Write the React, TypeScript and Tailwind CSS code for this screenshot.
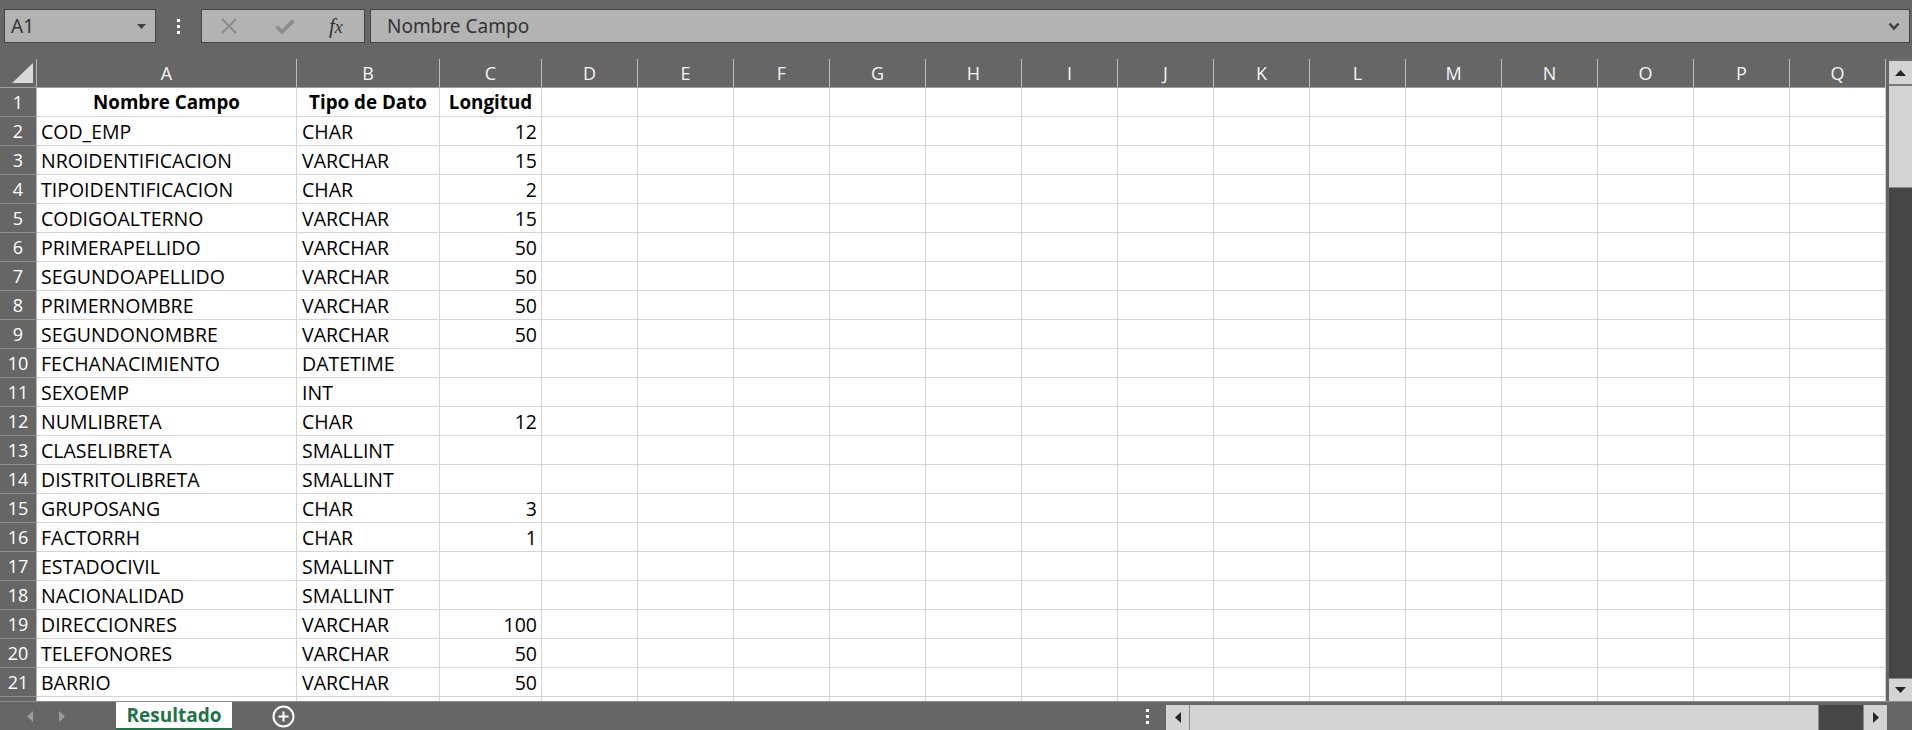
import React from "react";

type Row = [string, string, string];

const DATA: Row[] = [
  ["COD_EMP", "CHAR", "12"],
  ["NROIDENTIFICACION", "VARCHAR", "15"],
  ["TIPOIDENTIFICACION", "CHAR", "2"],
  ["CODIGOALTERNO", "VARCHAR", "15"],
  ["PRIMERAPELLIDO", "VARCHAR", "50"],
  ["SEGUNDOAPELLIDO", "VARCHAR", "50"],
  ["PRIMERNOMBRE", "VARCHAR", "50"],
  ["SEGUNDONOMBRE", "VARCHAR", "50"],
  ["FECHANACIMIENTO", "DATETIME", ""],
  ["SEXOEMP", "INT", ""],
  ["NUMLIBRETA", "CHAR", "12"],
  ["CLASELIBRETA", "SMALLINT", ""],
  ["DISTRITOLIBRETA", "SMALLINT", ""],
  ["GRUPOSANG", "CHAR", "3"],
  ["FACTORRH", "CHAR", "1"],
  ["ESTADOCIVIL", "SMALLINT", ""],
  ["NACIONALIDAD", "SMALLINT", ""],
  ["DIRECCIONRES", "VARCHAR", "100"],
  ["TELEFONORES", "VARCHAR", "50"],
  ["BARRIO", "VARCHAR", "50"],
];

const LETTERS = ["A", "B", "C", "D", "E", "F", "G", "H", "I", "J", "K", "L", "M", "N", "O", "P", "Q"];
const EXTRA = 14;

const GRID = "grid grid-cols-[37px_260px_143px_102px_repeat(14,96px)]";

function EmptyCells({ h }: { h: string }) {
  return (
    <>
      {Array.from({ length: EXTRA }).map((_, i) => (
        <div key={i} className={`${h} bg-white border-r border-b border-[#d4d4d4]`} />
      ))}
    </>
  );
}

function SheetRow({ n, cells, bold }: { n: number; cells: Row; bold?: boolean }) {
  const txt = `${bold ? "text-[18.8px]" : "text-[19.5px]"} leading-[29px] text-black whitespace-nowrap overflow-hidden`;
  return (
    <div className={`${GRID} h-[29px]`}>
      <div className="h-[29px] bg-[#666666] border-r border-b border-r-[#b4b4b4] border-b-[#8e8e8e] flex items-center justify-center text-[18px] text-white">
        {n}
      </div>
      <div
        className={`h-[29px] bg-white border-r border-b border-[#d4d4d4] ${txt} ${
          bold ? "font-bold text-center" : "pl-[4px]"
        }`}
      >
        {cells[0]}
      </div>
      <div
        className={`h-[29px] bg-white border-r border-b border-[#d4d4d4] ${txt} ${
          bold ? "font-bold text-center" : "pl-[5px]"
        }`}
      >
        {cells[1]}
      </div>
      <div
        className={`h-[29px] bg-white border-r border-b border-[#d4d4d4] ${txt} ${
          bold ? "font-bold text-center" : "text-right pr-[4px]"
        }`}
      >
        {cells[2]}
      </div>
      <EmptyCells h="h-[29px]" />
    </div>
  );
}

function TriDown({ className }: { className?: string }) {
  return (
    <svg width="9" height="5" viewBox="0 0 9 5" className={className}>
      <path d="M0 0 L9 0 L4.5 5 Z" fill="#404040" />
    </svg>
  );
}

export default function App() {
  return (
    <div className="w-[1912px] h-[730px] bg-[#666666] flex flex-col overflow-hidden font-['Open_Sans',sans-serif]">
      {/* Toolbar */}
      <div className="h-[59px] flex items-start pt-[9px] pl-[4px] shrink-0">
        <div className="w-[152px] h-[34px] bg-[#b3b3b3] border border-[#444444] flex items-center justify-between pl-[6px] pr-[9px]">
          <span className="text-[19px] text-[#333333] leading-none font-['Noto_Sans',sans-serif]">A1</span>
          <TriDown />
        </div>
        <div className="w-[45px] h-[34px] flex flex-col items-center justify-center gap-[3px]">
          <div className="w-[3px] h-[3px] bg-white" />
          <div className="w-[3px] h-[3px] bg-white" />
          <div className="w-[3px] h-[3px] bg-white" />
        </div>
        <div className="w-[164px] h-[34px] bg-[#b3b3b3] border border-[#444444] flex items-center">
          <svg width="18" height="18" viewBox="0 0 18 18" className="ml-[18px]">
            <path d="M2 2 L16 16 M16 2 L2 16" stroke="#8a8a8a" strokeWidth="2" />
          </svg>
          <svg width="20" height="17" viewBox="0 0 20 17" className="ml-[37px]">
            <path d="M1.5 8.5 L7 14 L18.5 2.5" stroke="#8a8a8a" strokeWidth="3.4" fill="none" />
          </svg>
          <span className="ml-[34px] text-[21px] italic text-[#333333] font-['Liberation_Serif',serif] leading-none">
            <span className="font-normal">f</span>
            <span className="text-[18px]">x</span>
          </span>
        </div>
        <div className="ml-[5px] w-[1540px] h-[34px] bg-[#b3b3b3] border border-[#444444] flex items-center justify-between pl-[16px] pr-[9px]">
          <span className="text-[19px] text-[#333333] leading-none font-['Noto_Sans',sans-serif]">Nombre Campo</span>
          <svg width="12" height="9" viewBox="0 0 12 9">
            <path d="M1.5 1.5 L6 6.5 L10.5 1.5" stroke="#404040" strokeWidth="2.6" fill="none" />
          </svg>
        </div>
      </div>

      {/* Main grid area */}
      <div className="h-[642px] flex shrink-0">
        <div className="w-[1886px] flex flex-col overflow-hidden">
          {/* Column header */}
          <div className={`${GRID} h-[29px]`}>
            <div className="h-[29px] border-r border-b border-r-[#b4b4b4] border-b-[#a0a0a0] relative">
              <svg width="37" height="29" viewBox="0 0 37 29" className="absolute left-0 top-0">
                <path d="M33 4 L33 24 L12 24 Z" fill="#d9d9d9" />
              </svg>
            </div>
            {LETTERS.map((l) => (
              <div
                key={l}
                className="h-[29px] border-r border-b border-r-[#bdbdbd] border-b-[#a0a0a0] flex items-center justify-center text-[18px] text-[#f4f4f4]"
              >
                {l}
              </div>
            ))}
          </div>
          <SheetRow n={1} cells={["Nombre Campo", "Tipo de Dato", "Longitud"]} bold />
          {DATA.map((r, i) => (
            <SheetRow key={i} n={i + 2} cells={r} />
          ))}
          {/* partial row 22 */}
          <div className={`${GRID} h-[4px]`}>
            <div className="h-[4px] bg-[#666666] border-r border-r-[#b4b4b4]" />
            <div className="h-[4px] bg-white border-r border-[#d4d4d4]" />
            <div className="h-[4px] bg-white border-r border-[#d4d4d4]" />
            <div className="h-[4px] bg-white border-r border-[#d4d4d4]" />
            {Array.from({ length: EXTRA }).map((_, i) => (
              <div key={i} className="h-[4px] bg-white border-r border-[#d4d4d4]" />
            ))}
          </div>
        </div>

        {/* Vertical scrollbar */}
        <div className="w-[26px] pl-[3px] flex">
          <div className="w-[23px] flex flex-col bg-[#464646]">
            <div className="h-[2px] bg-[#6e6e6e]" />
            <div className="h-[23px] bg-[#d4d4d4] flex items-center justify-center">
              <svg width="11" height="6" viewBox="0 0 11 6">
                <path d="M0 6 L11 6 L5.5 0 Z" fill="#262626" />
              </svg>
            </div>
            <div className="h-[2px] bg-[#7a7a7a]" />
            <div className="h-[102px] bg-[#d4d4d4] border-b border-[#8a8a8a]" />
            <div className="flex-1 bg-[#464646]" />
            <div className="h-[23px] bg-[#d4d4d4] border-t border-[#8a8a8a] flex items-center justify-center">
              <svg width="11" height="6" viewBox="0 0 11 6">
                <path d="M0 0 L11 0 L5.5 6 Z" fill="#262626" />
              </svg>
            </div>
          </div>
        </div>
      </div>

      {/* Bottom bar */}
      <div className="h-[29px] flex shrink-0 border-t border-[#8c8c8c]">
        <div className="w-[116px] flex items-center">
          <svg width="8" height="11" viewBox="0 0 8 11" className="ml-[26px]">
            <path d="M7 0 L7 11 L1 5.5 Z" fill="#9c9c9c" />
          </svg>
          <svg width="8" height="11" viewBox="0 0 8 11" className="ml-[24px]">
            <path d="M1 0 L1 11 L7 5.5 Z" fill="#9c9c9c" />
          </svg>
        </div>
        <div className="w-[116px] bg-white border-b-2 border-[#217346] flex items-center justify-center">
          <span className="text-[19px] font-bold text-[#217346] leading-none">Resultado</span>
        </div>
        <div className="ml-[40px] flex items-center">
          <svg width="23" height="23" viewBox="0 0 23 23">
            <circle cx="11.5" cy="11.5" r="10" stroke="white" strokeWidth="2" fill="none" />
            <path d="M11.5 6.5 L11.5 16.5 M6.5 11.5 L16.5 11.5" stroke="white" strokeWidth="2" />
          </svg>
        </div>
        <div className="flex-1" />
        <div className="w-[38px] flex flex-col items-center justify-center gap-[3px]">
          <div className="w-[3px] h-[3px] bg-white" />
          <div className="w-[3px] h-[3px] bg-white" />
          <div className="w-[3px] h-[3px] bg-white" />
        </div>
        <div className="w-[721px] h-[25px] mt-[3px] flex bg-[#464646]">
          <div className="w-[24px] h-[25px] bg-[#d4d4d4] flex items-center justify-center border-r border-[#8a8a8a]">
            <svg width="6" height="11" viewBox="0 0 6 11">
              <path d="M6 0 L6 11 L0 5.5 Z" fill="#262626" />
            </svg>
          </div>
          <div className="w-[629px] h-[25px] bg-[#d4d4d4] border-r border-[#8a8a8a]" />
          <div className="flex-1" />
          <div className="w-[24px] h-[25px] bg-[#d4d4d4] border-l border-[#8a8a8a] flex items-center justify-center">
            <svg width="6" height="11" viewBox="0 0 6 11">
              <path d="M0 0 L0 11 L6 5.5 Z" fill="#262626" />
            </svg>
          </div>
        </div>
        <div className="w-[25px]" />
      </div>
    </div>
  );
}
